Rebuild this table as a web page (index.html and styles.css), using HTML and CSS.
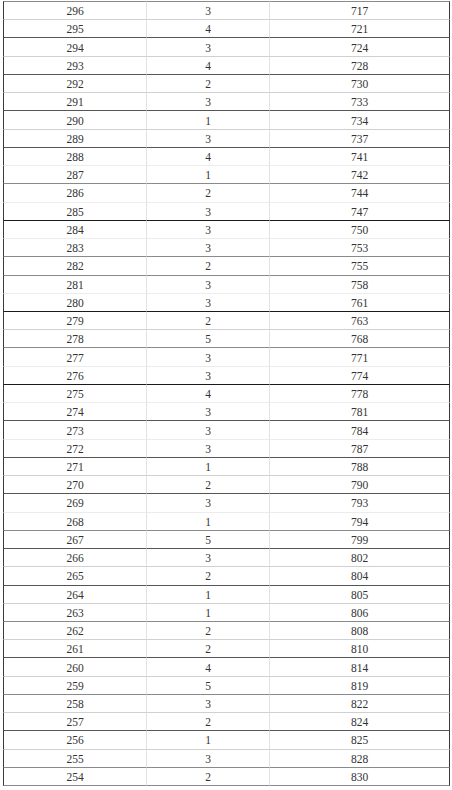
FILE: index.html
```html
<!DOCTYPE html>
<html>
<head>
<meta charset="utf-8">
<link rel="stylesheet" href="styles.css">
</head>
<body>
<table class="tbl">
<tbody>
<tr class="g"><td>296</td><td>3</td><td>717</td></tr>
<tr class="l"><td>295</td><td>4</td><td>721</td></tr>
<tr class="d"><td>294</td><td>3</td><td>724</td></tr>
<tr class="l"><td>293</td><td>4</td><td>728</td></tr>
<tr class="d"><td>292</td><td>2</td><td>730</td></tr>
<tr class="l"><td>291</td><td>3</td><td>733</td></tr>
<tr class="d"><td>290</td><td>1</td><td>734</td></tr>
<tr class="l"><td>289</td><td>3</td><td>737</td></tr>
<tr class="d"><td>288</td><td>4</td><td>741</td></tr>
<tr class="f"><td>287</td><td>1</td><td>742</td></tr>
<tr class="g"><td>286</td><td>2</td><td>744</td></tr>
<tr class="f"><td>285</td><td>3</td><td>747</td></tr>
<tr class="k"><td>284</td><td>3</td><td>750</td></tr>
<tr class="f"><td>283</td><td>3</td><td>753</td></tr>
<tr class="g"><td>282</td><td>2</td><td>755</td></tr>
<tr class="g"><td>281</td><td>3</td><td>758</td></tr>
<tr class="f"><td>280</td><td>3</td><td>761</td></tr>
<tr class="k"><td>279</td><td>2</td><td>763</td></tr>
<tr class="l"><td>278</td><td>5</td><td>768</td></tr>
<tr class="g"><td>277</td><td>3</td><td>771</td></tr>
<tr class="f"><td>276</td><td>3</td><td>774</td></tr>
<tr class="k"><td>275</td><td>4</td><td>778</td></tr>
<tr class="f"><td>274</td><td>3</td><td>781</td></tr>
<tr class="d"><td>273</td><td>3</td><td>784</td></tr>
<tr class="f"><td>272</td><td>3</td><td>787</td></tr>
<tr class="d"><td>271</td><td>1</td><td>788</td></tr>
<tr class="l"><td>270</td><td>2</td><td>790</td></tr>
<tr class="d"><td>269</td><td>3</td><td>793</td></tr>
<tr class="f"><td>268</td><td>1</td><td>794</td></tr>
<tr class="g"><td>267</td><td>5</td><td>799</td></tr>
<tr class="d"><td>266</td><td>3</td><td>802</td></tr>
<tr class="l"><td>265</td><td>2</td><td>804</td></tr>
<tr class="d"><td>264</td><td>1</td><td>805</td></tr>
<tr class="l"><td>263</td><td>1</td><td>806</td></tr>
<tr class="g"><td>262</td><td>2</td><td>808</td></tr>
<tr class="l"><td>261</td><td>2</td><td>810</td></tr>
<tr class="d"><td>260</td><td>4</td><td>814</td></tr>
<tr class="l"><td>259</td><td>5</td><td>819</td></tr>
<tr class="g"><td>258</td><td>3</td><td>822</td></tr>
<tr class="l"><td>257</td><td>2</td><td>824</td></tr>
<tr class="d"><td>256</td><td>1</td><td>825</td></tr>
<tr class="l"><td>255</td><td>3</td><td>828</td></tr>
<tr class="g last"><td>254</td><td>2</td><td>830</td></tr>
</tbody>
</table>
</body>
</html>
```

FILE: styles.css
```css
html, body {
  margin: 0;
  padding: 0;
  background: #ffffff;
}

body {
  padding: 1px 0 0 3px;
}

.tbl {
  border-collapse: separate;
  border-spacing: 0;
  table-layout: fixed;
  width: 447px;
  font-family: "Liberation Serif", "Times New Roman", serif;
  font-size: 11.5px;
  color: #333333;
}

.tbl td {
  box-sizing: border-box;
  height: 18.24px;
  padding: 2px 0 0 0;
  line-height: 15px;
  text-align: center;
  vertical-align: middle;
  border-top: 1px solid #d0d0d0;
  border-left: 1px solid #e2e2e2;
}

.tbl td:nth-child(1) {
  width: 143px;
  border-left: 1px solid #3a3a3a;
}

.tbl td:nth-child(2) {
  width: 123px;
}

.tbl td:nth-child(3) {
  width: 181px;
  border-right: 1px solid #3a3a3a;
}

.tbl tr.d td { border-top-color: #555555; }
.tbl tr.k td { border-top-color: #1a1a1a; }
.tbl tr.g td { border-top-color: #8a8a8a; }
.tbl tr.l td { border-top-color: #d0d0d0; }
.tbl tr.f td { border-top-color: #ececec; }

.tbl tr.last td {
  border-bottom: 1px solid #8a8a8a;
}
```
